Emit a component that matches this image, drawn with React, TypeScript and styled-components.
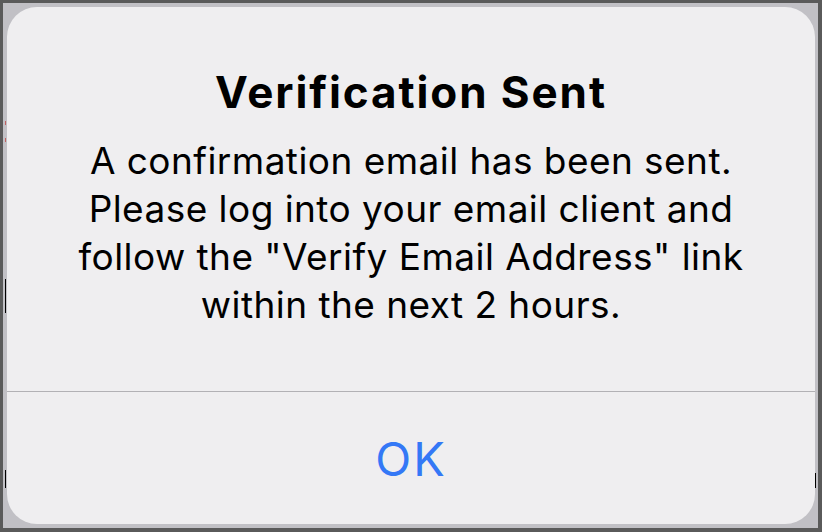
import React from "react";
import styled, { createGlobalStyle } from "styled-components";

const Global = createGlobalStyle`
  html, body { margin: 0; padding: 0; }
  body { width: 822px; height: 532px; overflow: hidden; font-family: Inter, "Noto Sans", sans-serif; }
  * { box-sizing: border-box; }
`;

const Frame = styled.div`
  position: relative;
  width: 822px;
  height: 532px;
  background: #c1c0c5;
  border-style: solid;
  border-color: #5a5a5a;
  border-width: 3px 4px 4px 3px;
  padding: 4px 3px 4px 4px;
  display: flex;
`;

const Dialog = styled.div`
  flex: 1;
  background: #efeef0;
  border-radius: 30px;
  display: flex;
  flex-direction: column;
  overflow: hidden;
`;

const Content = styled.div`
  padding: 59px 10px 0;
  height: 384px;
  display: flex;
  flex-direction: column;
  align-items: center;
  text-align: center;
  color: #000;
`;

const Title = styled.h1`
  margin: 0;
  font-size: 44px;
  line-height: 52px;
  font-weight: 700;
  letter-spacing: 1.9px;
`;

const Message = styled.p`
  margin: 19px 0 0;
  font-size: 37px;
  line-height: 48px;
  font-weight: 400;
  letter-spacing: 0.45px;
  white-space: nowrap;
`;

const Divider = styled.div`
  height: 1px;
  background: #b2b1b5;
`;

const Button = styled.button`
  flex: 1;
  border: 0;
  background: transparent;
  color: #3478f6;
  font-family: Inter, "Noto Sans", sans-serif;
  font-size: 47px;
  font-weight: 400;
  letter-spacing: 2px;
  cursor: pointer;
  padding: 0;
`;

const Mark = styled.span<{ $x: number; $y: number; $h: number; $c: string }>`
  position: absolute;
  left: ${(p) => p.$x}px;
  top: ${(p) => p.$y}px;
  width: 1px;
  height: ${(p) => p.$h}px;
  background: ${(p) => p.$c};
`;

export default function App() {
  return (
    <>
      <Global />
      <Frame>
        <Dialog>
          <Content>
            <Title>Verification Sent</Title>
            <Message>
              A confirmation email has been sent.
              <br />
              Please log into your email client and
              <br />
              follow the "Verify Email Address" link
              <br />
              within the next 2 hours.
            </Message>
          </Content>
          <Divider />
          <Button>OK</Button>
        </Dialog>
      </Frame>
      <Mark $x={5} $y={279} $h={34} $c="#000" />
      <Mark $x={5} $y={470} $h={18} $c="#000" />
      <Mark $x={815} $y={473} $h={15} $c="#000" />
      <Mark $x={5} $y={121} $h={4} $c="#c06060" />
      <Mark $x={5} $y={138} $h={4} $c="#c06060" />
    </>
  );
}
